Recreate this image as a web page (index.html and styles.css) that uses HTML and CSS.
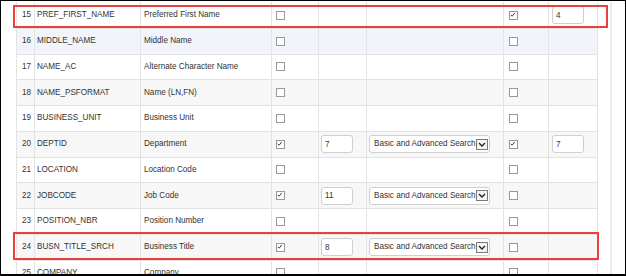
FILE: index.html
```html
<!DOCTYPE html>
<html lang="en">
<head>
  <meta charset="utf-8">
  <title>Search Fields</title>
  <link rel="stylesheet" href="styles.css">
</head>
<body>

  <div class="sheet">
    <div class="panel">
      <table class="grid">
        <colgroup>
          <col style="width:18px"><col style="width:106px"><col style="width:131px"><col style="width:47px">
          <col style="width:48px"><col style="width:137px"><col style="width:45px"><col style="width:49px">
        </colgroup>
        <tbody>
          <tr>
            <td class="num">15</td><td class="name">PREF_FIRST_NAME</td><td class="desc">Preferred First Name</td>
            <td class="chk"><span class="cb"></span></td><td class="ord"></td><td class="mode"></td>
            <td class="chk2"><span class="cb on"><svg viewBox="0 0 9 9"><path d="M2 4.6 3.8 6.4 7.1 2.2"/></svg></span></td>
            <td class="ord2"><input class="box" type="text" value="4" readonly></td>
          </tr>
          <tr class="hover">
            <td class="num">16</td><td class="name">MIDDLE_NAME</td><td class="desc">Middle Name</td>
            <td class="chk"><span class="cb"></span></td><td class="ord"></td><td class="mode"></td>
            <td class="chk2"><span class="cb"></span></td><td class="ord2"></td>
          </tr>
          <tr>
            <td class="num">17</td><td class="name">NAME_AC</td><td class="desc">Alternate Character Name</td>
            <td class="chk"><span class="cb"></span></td><td class="ord"></td><td class="mode"></td>
            <td class="chk2"><span class="cb"></span></td><td class="ord2"></td>
          </tr>
          <tr class="alt">
            <td class="num">18</td><td class="name">NAME_PSFORMAT</td><td class="desc">Name (LN,FN)</td>
            <td class="chk"><span class="cb"></span></td><td class="ord"></td><td class="mode"></td>
            <td class="chk2"><span class="cb"></span></td><td class="ord2"></td>
          </tr>
          <tr>
            <td class="num">19</td><td class="name">BUSINESS_UNIT</td><td class="desc">Business Unit</td>
            <td class="chk"><span class="cb"></span></td><td class="ord"></td><td class="mode"></td>
            <td class="chk2"><span class="cb"></span></td><td class="ord2"></td>
          </tr>
          <tr class="alt">
            <td class="num">20</td><td class="name">DEPTID</td><td class="desc">Department</td>
            <td class="chk"><span class="cb on"><svg viewBox="0 0 9 9"><path d="M2 4.6 3.8 6.4 7.1 2.2"/></svg></span></td>
            <td class="ord"><input class="box" type="text" value="7" readonly></td>
            <td class="mode"><span class="pick"><span class="pick-text">Basic and Advanced Search</span><span class="pick-arrow"><svg viewBox="0 0 9 9"><path d="M1.5 3 4.5 6 7.5 3"/></svg></span></span></td>
            <td class="chk2"><span class="cb on"><svg viewBox="0 0 9 9"><path d="M2 4.6 3.8 6.4 7.1 2.2"/></svg></span></td>
            <td class="ord2"><input class="box" type="text" value="7" readonly></td>
          </tr>
          <tr>
            <td class="num">21</td><td class="name">LOCATION</td><td class="desc">Location Code</td>
            <td class="chk"><span class="cb"></span></td><td class="ord"></td><td class="mode"></td>
            <td class="chk2"><span class="cb"></span></td><td class="ord2"></td>
          </tr>
          <tr class="alt">
            <td class="num">22</td><td class="name">JOBCODE</td><td class="desc">Job Code</td>
            <td class="chk"><span class="cb on"><svg viewBox="0 0 9 9"><path d="M2 4.6 3.8 6.4 7.1 2.2"/></svg></span></td>
            <td class="ord"><input class="box" type="text" value="11" readonly></td>
            <td class="mode"><span class="pick"><span class="pick-text">Basic and Advanced Search</span><span class="pick-arrow"><svg viewBox="0 0 9 9"><path d="M1.5 3 4.5 6 7.5 3"/></svg></span></span></td>
            <td class="chk2"><span class="cb"></span></td><td class="ord2"></td>
          </tr>
          <tr>
            <td class="num">23</td><td class="name">POSITION_NBR</td><td class="desc">Position Number</td>
            <td class="chk"><span class="cb"></span></td><td class="ord"></td><td class="mode"></td>
            <td class="chk2"><span class="cb"></span></td><td class="ord2"></td>
          </tr>
          <tr class="alt">
            <td class="num">24</td><td class="name">BUSN_TITLE_SRCH</td><td class="desc">Business Title</td>
            <td class="chk"><span class="cb on"><svg viewBox="0 0 9 9"><path d="M2 4.6 3.8 6.4 7.1 2.2"/></svg></span></td>
            <td class="ord"><input class="box" type="text" value="8" readonly></td>
            <td class="mode"><span class="pick"><span class="pick-text">Basic and Advanced Search</span><span class="pick-arrow"><svg viewBox="0 0 9 9"><path d="M1.5 3 4.5 6 7.5 3"/></svg></span></span></td>
            <td class="chk2"><span class="cb"></span></td><td class="ord2"></td>
          </tr>
          <tr>
            <td class="num">25</td><td class="name">COMPANY</td><td class="desc">Company</td>
            <td class="chk"><span class="cb"></span></td><td class="ord"></td><td class="mode"></td>
            <td class="chk2"><span class="cb"></span></td><td class="ord2"></td>
          </tr>
        </tbody>
      </table>
    </div>

    <!-- annotation boxes drawn over the grid -->
    <div class="mark mark-top"></div>
    <div class="mark mark-bottom"></div>
  </div>

</body>
</html>
```

FILE: styles.css
```css
*, *::before, *::after { box-sizing: border-box }

body {
  margin: 0;
  background: #fff;
  font: 8.15px/1 "Liberation Sans", Arial, sans-serif;
  color: #333;
  --line: #e3e3e3;
  --alt: #f7f7f7;
  --hover: #f1f5fb;
  --mark: #e8403a;
}

.sheet {
  position: relative;
  width: 626px;
  height: 276px;
  border: 1px solid #000;
  border-bottom-width: 2px;
  overflow: hidden;
  background: #fff;
}

.panel {
  width: 611px;
  height: 100%;
  padding-left: 15px;
  border-right: 2px solid #ebebeb;
}


/*///////////// Grid */

.grid {
  width: 582px;
  table-layout: fixed;
  border-collapse: collapse;
  margin-top: 1px;
}

.grid tr {
  height: 25.75px;
}

.grid td {
  border: 1px solid var(--line);
  padding: 0;
  white-space: nowrap;
  overflow: hidden;
  vertical-align: middle;
}

.grid tr:first-child td {
  border-top-color: transparent;
}

tr.alt td { background: var(--alt) }
tr.hover td { background: var(--hover) }

td.num { text-align: right; padding-right: 3px }
td.name { padding-left: 2px }
td.desc { padding-left: 3px }
td.chk { padding-left: 4px }
td.ord,
td.mode { padding-left: 2px }
td.chk2 { padding-left: 5px }
td.ord2 { padding-left: 3px }


/*///////////// Controls */

.cb {
  display: block;
  width: 9px;
  height: 9px;
  border: 1px solid #999;
  background: #fff;
}

.cb svg {
  display: block;
  width: 7px;
  height: 7px;
  overflow: visible;
}

.cb svg path {
  fill: none;
  stroke: #333;
  stroke-width: 1.2;
  transform: translate(-1px, -1px);
}

.box {
  display: block;
  width: 32px;
  height: 18px;
  border: 1px solid #cfcfcf;
  border-radius: 3px;
  padding: 0 3px;
  font: inherit;
  color: #333;
  background: #fff;
  outline: none;
}

.pick {
  display: flex;
  align-items: center;
  width: 121px;
  height: 18px;
  border: 1px solid #cfcfcf;
  border-radius: 3px;
  background: #fff;
  padding-left: 4px;
}

.pick-text {
  flex: 1;
  overflow: hidden;
  white-space: nowrap;
}

.pick-arrow {
  flex: none;
  width: 12px;
  height: 11px;
  margin-right: 1px;
  border: 1px solid #7a7a7a;
  background: #f4f4f4;
}

.pick-arrow svg {
  display: block;
  width: 10px;
  height: 9px;
}

.pick-arrow path {
  fill: none;
  stroke: #222;
  stroke-width: 1.4;
}


/*///////////// Annotations */

.mark {
  position: absolute;
  border: 2px solid var(--mark);
}

.mark-top {
  left: 12px;
  top: 4px;
  width: 595px;
  height: 23px;
}

.mark-bottom {
  left: 12px;
  top: 231px;
  width: 586px;
  height: 28px;
}
```
